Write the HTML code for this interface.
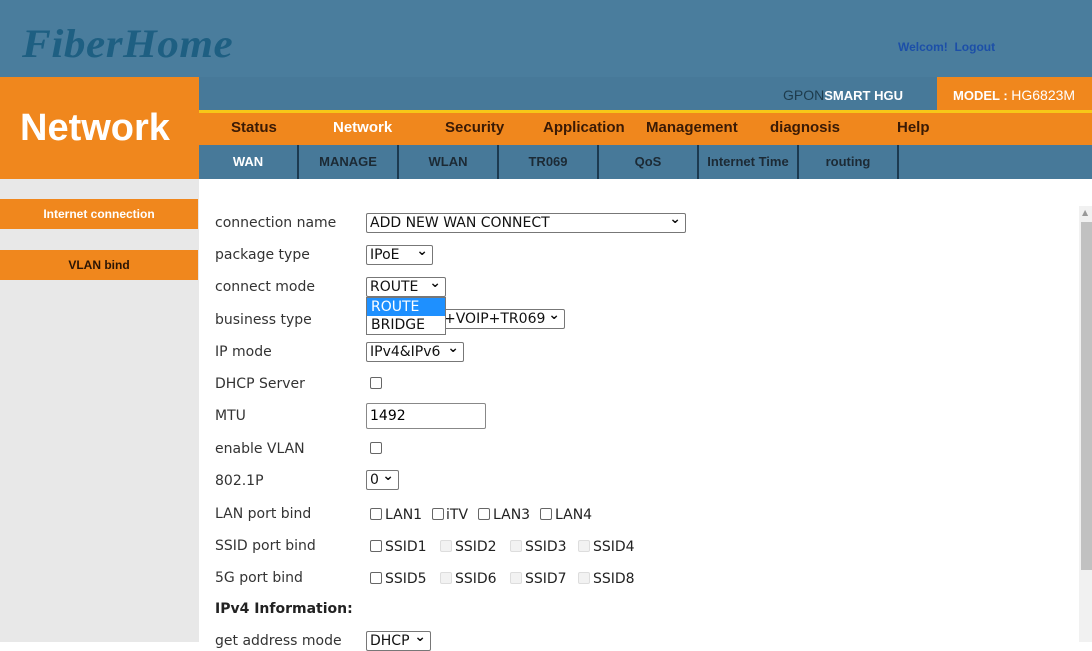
<!DOCTYPE html>
<html><head><style>
*{margin:0;padding:0;box-sizing:border-box}
body{width:1092px;height:642px;overflow:hidden;background:#fff;font-family:"DejaVu Sans","Liberation Sans",sans-serif;position:relative}
.a{position:absolute}
.top{left:0;top:0;width:1092px;height:77px;background:#4a7d9d}
.band{left:199px;top:77px;width:893px;height:34px;background:#477999}
.logo{left:22px;top:20px;font:italic bold 40px "Liberation Serif",serif;color:#1e5f82;letter-spacing:0.5px;transform:scaleX(1.08);transform-origin:left}
.welcome{left:898px;top:40px;font:bold 12px "Liberation Sans",sans-serif;color:#1c4fa8}
.netbox{left:0;top:77px;width:199px;height:102px;background:#f0871d;color:#fff;font:bold 38px "Liberation Sans",sans-serif;padding:30px 0 0 20px}
.model{left:937px;top:77px;width:155px;height:34px;background:#f0871d;color:#fff;font:bold 13px "Liberation Sans",sans-serif;padding:10px 0 0 16px}
.model span{font-weight:normal;color:#fff;font-size:14px}
.gpon{left:783px;top:87px;font:14px "Liberation Sans",sans-serif;color:#1d3b4c}
.gpon b{color:#fff;font-size:13px}
.nav{left:199px;top:110px;width:893px;height:35px;background:#f0871d;border-top:3px solid #f7c718}
.nav span{position:absolute;top:6px;font:bold 15px "Liberation Sans",sans-serif;color:#3a1a05}
.sub{left:199px;top:145px;width:893px;height:34px;background:#477999}
.sub span{position:absolute;top:0;height:34px;width:100px;border-right:2px solid #1c3a50;text-align:center;font:bold 13px/34px "Liberation Sans",sans-serif;color:#1c2a35}
.side{left:0;top:179px;width:199px;height:463px;background:#e8e8e8}
.sbtn{left:0;width:198px;height:30px;background:#f0871d;text-align:center;font:bold 12px/30px "Liberation Sans",sans-serif}
.lbl{left:215px;font-size:14px;color:#333}
.sel{border:1px solid #777;border-radius:2px;background:#fff;height:20px;font-size:14px;color:#111;padding:0 0 0 3px;line-height:18px}
.sel:after{content:"⌄";position:absolute;right:4px;top:-4px;font-weight:bold;font-size:14px}
.cb{width:12px;height:12px;border:1px solid #666;border-radius:2px;background:#fff}
.cbd{width:12px;height:12px;border:1px solid #ddd;border-radius:2px;background:#f2f2f2}
.t{font-size:14px;color:#222}
</style></head><body>
<div class="a top"></div>
<div class="a band"></div>
<div class="a logo">FiberHome</div>
<div class="a welcome">Welcom!&nbsp; Logout</div>
<div class="a netbox">Network</div>
<div class="a gpon">GPON<b>SMART HGU</b></div>
<div class="a model">MODEL : <span>HG6823M</span></div>
<div class="a nav">
<span style="left:32px">Status</span><span style="left:134px;color:#fff">Network</span><span style="left:246px">Security</span><span style="left:344px">Application</span><span style="left:447px">Management</span><span style="left:571px">diagnosis</span><span style="left:698px">Help</span>
</div>
<div class="a sub">
<span style="left:0;color:#fff">WAN</span><span style="left:100px">MANAGE</span><span style="left:200px">WLAN</span><span style="left:300px">TR069</span><span style="left:400px">QoS</span><span style="left:500px">Internet Time</span><span style="left:600px">routing</span>
</div>
<div class="a side"></div>
<div class="a sbtn" style="top:199px;color:#fff">Internet connection</div>
<div class="a sbtn" style="top:250px;color:#2a1505">VLAN bind</div>

<div class="a lbl" style="top:215px">connection name</div>
<div class="a sel" style="left:366px;top:213px;width:320px">ADD NEW WAN CONNECT</div>
<div class="a lbl" style="top:247px">package type</div>
<div class="a sel" style="left:366px;top:245px;width:67px">IPoE</div>
<div class="a lbl" style="top:279px">connect mode</div>
<div class="a sel" style="left:366px;top:277px;width:80px">ROUTE</div>
<div class="a lbl" style="top:312px">business type</div>
<div class="a sel" style="left:366px;top:309px;width:199px;padding-left:77px">+VOIP+TR069</div>
<div class="a" style="left:366px;top:297px;width:80px;height:38px;border:1px solid #777;background:#fff;font-size:14px;line-height:18px">
<div style="background:#1e90ff;color:#fff;padding-left:4px">ROUTE</div><div style="padding-left:4px;color:#111">BRIDGE</div></div>
<div class="a lbl" style="top:344px">IP mode</div>
<div class="a sel" style="left:366px;top:342px;width:98px">IPv4&amp;IPv6</div>
<div class="a lbl" style="top:376px">DHCP Server</div>
<div class="a cb" style="left:370px;top:377px"></div>
<div class="a lbl" style="top:408px">MTU</div>
<div class="a" style="left:366px;top:403px;width:120px;height:26px;border:1px solid #888;border-radius:2px;font-size:14px;padding:4px 0 0 3px">1492</div>
<div class="a lbl" style="top:441px">enable VLAN</div>
<div class="a cb" style="left:370px;top:442px"></div>
<div class="a lbl" style="top:473px">802.1P</div>
<div class="a sel" style="left:366px;top:470px;width:33px">0</div>
<div class="a lbl" style="top:506px">LAN port bind</div>
<div class="a cb" style="left:370px;top:508px"></div><div class="a t" style="left:385px;top:507px">LAN1</div>
<div class="a cb" style="left:432px;top:508px"></div><div class="a t" style="left:446px;top:507px">iTV</div>
<div class="a cb" style="left:478px;top:508px"></div><div class="a t" style="left:493px;top:507px">LAN3</div>
<div class="a cb" style="left:540px;top:508px"></div><div class="a t" style="left:555px;top:507px">LAN4</div>
<div class="a lbl" style="top:538px">SSID port bind</div>
<div class="a cb" style="left:370px;top:540px"></div><div class="a t" style="left:385px;top:539px">SSID1</div>
<div class="a cbd" style="left:440px;top:540px"></div><div class="a t" style="left:455px;top:539px">SSID2</div>
<div class="a cbd" style="left:510px;top:540px"></div><div class="a t" style="left:525px;top:539px">SSID3</div>
<div class="a cbd" style="left:578px;top:540px"></div><div class="a t" style="left:593px;top:539px">SSID4</div>
<div class="a lbl" style="top:570px">5G port bind</div>
<div class="a cb" style="left:370px;top:572px"></div><div class="a t" style="left:385px;top:571px">SSID5</div>
<div class="a cbd" style="left:440px;top:572px"></div><div class="a t" style="left:455px;top:571px">SSID6</div>
<div class="a cbd" style="left:510px;top:572px"></div><div class="a t" style="left:525px;top:571px">SSID7</div>
<div class="a cbd" style="left:578px;top:572px"></div><div class="a t" style="left:593px;top:571px">SSID8</div>
<div class="a lbl" style="top:601px;font-weight:bold;color:#222">IPv4 Information:</div>
<div class="a lbl" style="top:633px">get address mode</div>
<div class="a sel" style="left:366px;top:631px;width:65px">DHCP</div>

<div class="a" style="left:1079px;top:206px;width:13px;height:436px;background:#f1f1f1"></div>
<div class="a" style="left:1081px;top:222px;width:11px;height:348px;background:#c1c1c1"></div>
<div class="a" style="left:1082px;top:208px;font-size:8px;color:#999">▲</div>
</body></html>
